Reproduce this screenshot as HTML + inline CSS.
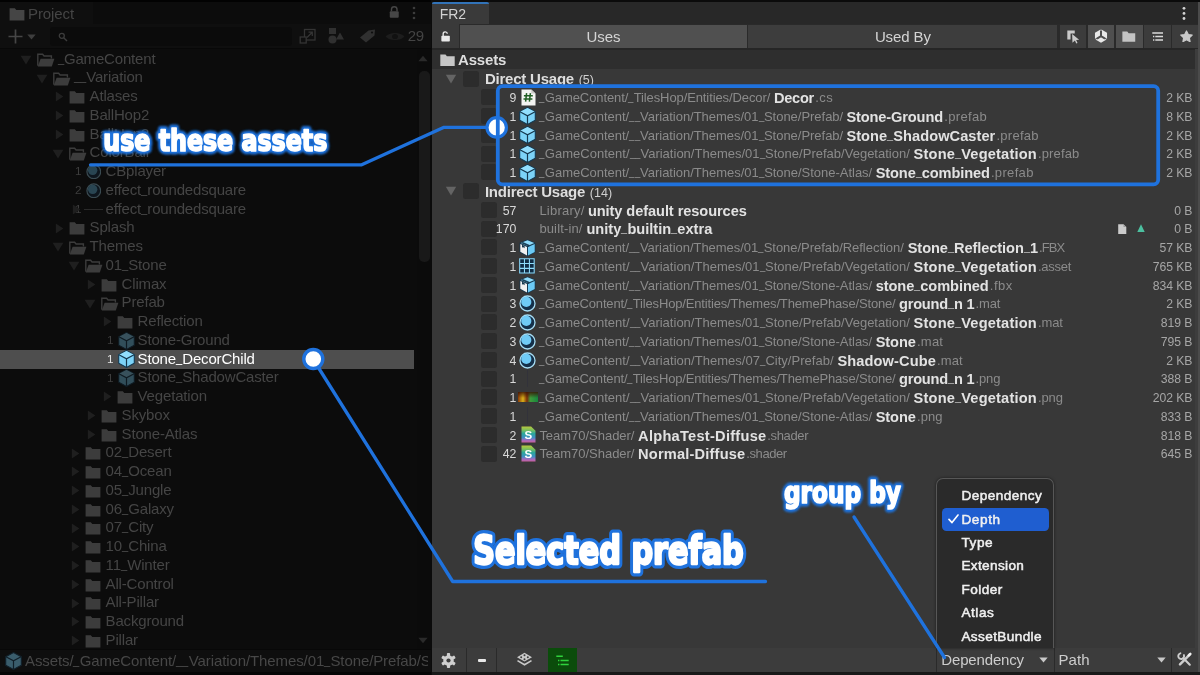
<!DOCTYPE html>
<html lang="en"><head><meta charset="utf-8"><title>FR2 - Find Reference 2</title>
<style>
*{box-sizing:border-box}
html,body{margin:0;padding:0}
body{width:1200px;height:675px;overflow:hidden;background:#0b0b0b;position:relative;font-family:"Liberation Sans",sans-serif;font-size:15px}
#L{position:absolute;left:0;top:0;width:431px;height:675px;background:#0c0c0c;overflow:hidden}
#R{position:absolute;left:432px;top:0;width:768px;height:675px;background:#383838;overflow:hidden}
.gl{position:absolute;left:0;top:0;right:0;bottom:0;will-change:transform}
.ic{position:absolute;display:block}
.t{position:absolute;white-space:pre;height:18.750px;line-height:18.750px}
i.u{font-style:normal;display:inline-block;width:.42em;transform:translateY(-.12em) scaleX(.74);transform-origin:0 50%}
.cb{position:absolute;width:15.500px;height:16px;background:#2c2c2c;border-radius:2.500px}
.cnt{text-align:right;font-size:12.300px;color:#d8d8d8;letter-spacing:0}
.ln{left:108px}
.p{font-size:13px;color:#8b8b8b;letter-spacing:-.15px}
.n{font-size:14.600px;font-weight:700;color:#e2e2e2;letter-spacing:-.12px}
.e{font-size:13px;color:#8b8b8b}
.sz{font-size:12.200px;color:#a6a6a6;letter-spacing:-.05px}
.grp .n{font-size:15px;color:#dedede;letter-spacing:-.22px}
.gc{font-size:12.500px;color:#cfcfcf;margin-left:.5px}
.lt{color:#454545;letter-spacing:-.17px;margin-left:-.4px}
.lc{color:#3d3d3d;font-size:11.800px;text-align:right}
.ls{color:#fff}
.sel{position:absolute;left:0;width:414px;height:18.400px;background:#4e4e4e}
.tb{position:absolute;top:24.500px;height:23px;display:flex;align-items:center;justify-content:center;color:#d4d4d4;font-size:15px;letter-spacing:-.1px}
.mi{font-size:13.600px;font-weight:400;color:#f0f0f0;-webkit-text-stroke:.5px #f0f0f0}</style></head>
<body>
<div id="L"><div class=gl>

<div style="position:absolute;left:0;top:0;width:431px;height:2px;background:#020202"></div>
<div style="position:absolute;left:0;top:2px;width:93px;height:22px;background:#0f0f0f"></div>
<div style="position:absolute;left:0;top:24px;width:431px;height:24px;background:#0f0f0f"></div>
<div style="position:absolute;left:0;top:48px;width:431px;height:1px;background:#080808"></div>
<svg class=ic style="left:9px;top:7px" width="16" height="14" viewBox="0 0 16 14"><path d="M.6 1.200h5.200l1.500 1.800h8.100v10.400H.600z" fill="#454545"/></svg>
<div class="t" style="left:28px;top:5.200px;color:#454545;letter-spacing:-.1px">Project</div>
<svg class=ic style="left:389.300px;top:6.300px" width="10.500" height="12.500" viewBox="0 0 11 13"><path d="M2.600 5.500V3.700a2.900 2.900 0 0 1 5.800 0v1.800" fill="none" stroke="#464646" stroke-width="1.500"/><rect x=".8" y="5.500" width="9.400" height="6.800" rx="1" fill="#464646"/></svg>
<svg class=ic style="left:412px;top:6px" width="4" height="14" viewBox="0 0 4 14"><circle cx="2" cy="2" r="1.300" fill="#3c3c3c"/><circle cx="2" cy="7" r="1.300" fill="#3c3c3c"/><circle cx="2" cy="12" r="1.300" fill="#3c3c3c"/></svg>
<svg class=ic style="left:8px;top:29px" width="15" height="15" viewBox="0 0 15 15"><path d="M7.500 .5v14M.5 7.500h14" stroke="#464646" stroke-width="1.700"/></svg>
<svg class=ic style="left:27px;top:34px" width="9" height="6" viewBox="0 0 9 6"><path d="M.3 .6h8.400L4.500 5.400z" fill="#3e3e3e"/></svg>
<div style="position:absolute;left:50px;top:27px;width:242px;height:19px;background:#0b0b0b;border-radius:3px"></div>
<svg class=ic style="left:58px;top:32px" width="10" height="10" viewBox="0 0 10 10"><circle cx="3.800" cy="3.800" r="2.500" fill="none" stroke="#3c3c3c" stroke-width="1.300"/><path d="M5.700 5.700 9 9" stroke="#3c3c3c" stroke-width="1.400"/></svg>
<svg class=ic style="left:299px;top:28px" width="18" height="17" viewBox="0 0 18 17"><rect x="5.500" y="1.500" width="10.500" height="10.500" fill="none" stroke="#343434" stroke-width="1.300"/><rect x="1.200" y="9" width="6" height="6" fill="#0f0f0f" stroke="#343434" stroke-width="1.300"/><path d="M8 9.500 13 4.500M9.500 4.200h3.800v3.800" fill="none" stroke="#343434" stroke-width="1.300"/></svg>
<svg class=ic style="left:327px;top:27px" width="18" height="18" viewBox="0 0 18 18"><rect x="2" y="1" width="7" height="6" fill="#303030"/><circle cx="5.500" cy="12.500" r="4" fill="#303030"/><path d="M13 5.500 17 12.500H9z" fill="#303030"/></svg>
<svg class=ic style="left:358.500px;top:28px" width="18" height="16" viewBox="0 0 18 16"><path d="M1 9.500 9.500 2.500 16 1.500 15.500 7.500 7 14.500z" fill="#303030"/><circle cx="13" cy="4.500" r="1.100" fill="#0f0f0f"/></svg>
<svg class=ic style="left:385px;top:31px" width="20" height="11" preserveAspectRatio="none" viewBox="0 0 18 11"><path d="M.5 5.500C4 .8 14 .8 17.500 5.500 14 10.200 4 10.200 .5 5.500z" fill="#1d1d1d"/><circle cx="9" cy="5.500" r="2.600" fill="#111"/></svg>
<div class="t" style="left:407.800px;top:27.400px;color:#444;letter-spacing:-.3px">29</div>
<div style="position:absolute;left:417px;top:49px;width:14px;height:600px;background:#0b0b0b"></div>
<div style="position:absolute;left:419px;top:71px;width:10.500px;height:191px;background:#191919;border-radius:5px"></div>
<svg class=ic style="left:418.300px;top:55.300px" width="10" height="7" viewBox="0 0 10 7"><path d="M5 .8 9.600 6.200H.400z" fill="#2a2a2a"/></svg>
<svg class=ic style="left:418.300px;top:636.800px" width="10" height="7" viewBox="0 0 10 7"><path d="M5 6.200 9.600 .8H.400z" fill="#2a2a2a"/></svg>
<div style="position:absolute;left:0;top:649px;width:431px;height:26px;background:#0e0e0e;border-top:1px solid #080808"></div>
<div style="position:absolute;left:0;top:672px;width:431px;height:3px;background:#060606"></div>
<svg class=ic style="left:5px;top:652px" width="17" height="18" viewBox="0 0 17 18" opacity=".4"><path d="M8.500 .6 16.300 4.700v8.600L8.500 17.400.7 13.300V4.700z" fill="#7cd3f8" stroke="#15384f" stroke-width="1.100"/><path d="M.9 4.800 8.500 8.900 16.100 4.800M8.500 8.900v8.300" fill="none" stroke="#15384f" stroke-width="1.200"/></svg>
<div class="t" style="left:25px;top:652.200px;width:403px;overflow:hidden;color:#474747;letter-spacing:-.1px">Assets/<i class=u>_</i>GameContent/<i class=u>_</i><i class=u>_</i>Variation/Themes/01<i class=u>_</i>Stone/Prefab/Stone<i class=u>_</i>DecorChild.prefab</div>

<svg class=ic style="left:20.4px;top:54.9px" width="12" height="10" viewBox="0 0 12 10"><path d="M.6 .8h10.800L6 9.400z" fill="#1f1f1f"/></svg>
<svg class=ic style="left:36.7px;top:53.1px" width="18" height="14" viewBox="0 0 18 14"><path d="M.8 12.800V1.200h4.800l1.500 1.800h7.300v2.600" fill="none" stroke="#3c3c3c" stroke-width="1.400"/><path d="M3.600 5.800h13.800l-2.600 7.600H.800z" fill="#3c3c3c"/></svg>
<div class="t lt" style="left:58px;top:49.60px"><i class=u>_</i>GameContent</div>
<svg class=ic style="left:36.4px;top:73.65px" width="12" height="10" viewBox="0 0 12 10"><path d="M.6 .8h10.800L6 9.400z" fill="#1f1f1f"/></svg>
<svg class=ic style="left:52.7px;top:71.85px" width="18" height="14" viewBox="0 0 18 14"><path d="M.8 12.800V1.200h4.800l1.500 1.800h7.300v2.600" fill="none" stroke="#3c3c3c" stroke-width="1.400"/><path d="M3.600 5.800h13.800l-2.600 7.600H.800z" fill="#3c3c3c"/></svg>
<div class="t lt" style="left:74px;top:68.35px"><i class=u>_</i><i class=u>_</i>Variation</div>
<svg class=ic style="left:55px;top:91.3px" width="9" height="11" viewBox="0 0 9 11"><path d="M.8 .6 8.400 5.500.800 10.400z" fill="#1f1f1f"/></svg>
<svg class=ic style="left:69.4px;top:90.0px" width="16" height="14" viewBox="0 0 16 14"><path d="M.6 1.200h5.200l1.500 1.800h8.100v10.400H.600z" fill="#3c3c3c"/></svg>
<div class="t lt" style="left:90px;top:87.10px">Atlases</div>
<svg class=ic style="left:55px;top:110.05px" width="9" height="11" viewBox="0 0 9 11"><path d="M.8 .6 8.400 5.500.800 10.400z" fill="#1f1f1f"/></svg>
<svg class=ic style="left:69.4px;top:108.75px" width="16" height="14" viewBox="0 0 16 14"><path d="M.6 1.200h5.200l1.500 1.800h8.100v10.400H.600z" fill="#3c3c3c"/></svg>
<div class="t lt" style="left:90px;top:105.85px">BallHop2</div>
<svg class=ic style="left:55px;top:128.8px" width="9" height="11" viewBox="0 0 9 11"><path d="M.8 .6 8.400 5.500.800 10.400z" fill="#1f1f1f"/></svg>
<svg class=ic style="left:69.4px;top:127.5px" width="16" height="14" viewBox="0 0 16 14"><path d="M.6 1.200h5.200l1.500 1.800h8.100v10.400H.600z" fill="#3c3c3c"/></svg>
<div class="t lt" style="left:90px;top:124.60px">BallHop3</div>
<svg class=ic style="left:52.4px;top:148.65px" width="12" height="10" viewBox="0 0 12 10"><path d="M.6 .8h10.800L6 9.400z" fill="#1f1f1f"/></svg>
<svg class=ic style="left:68.7px;top:146.85px" width="18" height="14" viewBox="0 0 18 14"><path d="M.8 12.800V1.200h4.800l1.500 1.800h7.300v2.600" fill="none" stroke="#3c3c3c" stroke-width="1.400"/><path d="M3.600 5.800h13.800l-2.600 7.600H.800z" fill="#3c3c3c"/></svg>
<div class="t lt" style="left:90px;top:143.35px">ColorBall</div>
<div class="t lc" style="left:68px;width:13.500px;top:162.40px"><span>1</span></div>
<svg class=ic style="left:85.6px;top:163.8px" width="15.6" height="15.6" viewBox="0 0 17 17" opacity=".3"><circle cx="8.500" cy="8.500" r="7.500" fill="#14304a" stroke="#a5dcf3" stroke-width="1.300"/><circle cx="7.300" cy="6.900" r="5.100" fill="#6fcbf6"/></svg>
<div class="t lt" style="left:106px;top:162.10px">CBplayer</div>
<div class="t lc" style="left:68px;width:13.500px;top:181.15px"><span>2</span></div>
<svg class=ic style="left:85.6px;top:182.55px" width="15.6" height="15.6" viewBox="0 0 17 17" opacity=".3"><circle cx="8.500" cy="8.500" r="7.500" fill="#14304a" stroke="#a5dcf3" stroke-width="1.300"/><circle cx="7.300" cy="6.900" r="5.100" fill="#6fcbf6"/></svg>
<div class="t lt" style="left:106px;top:180.85px">effect<i class=u>_</i>roundedsquare</div>
<div class="t lc" style="left:68px;width:13.500px;top:199.90px"><span>1</span></div>
<div class=ic style="left:83.5px;top:208.60px;width:19px;height:1.600px;background:#2a2a2a"></div>
<svg class=ic style="left:72px;top:204.2px" width="9" height="11" viewBox="0 0 9 11"><path d="M.8 .6 8.400 5.500.800 10.400z" fill="#1f1f1f"/></svg>
<div class="t lt" style="left:106px;top:199.60px">effect<i class=u>_</i>roundedsquare</div>
<svg class=ic style="left:55px;top:222.55px" width="9" height="11" viewBox="0 0 9 11"><path d="M.8 .6 8.400 5.500.800 10.400z" fill="#1f1f1f"/></svg>
<svg class=ic style="left:69.4px;top:221.25px" width="16" height="14" viewBox="0 0 16 14"><path d="M.6 1.200h5.200l1.500 1.800h8.100v10.400H.600z" fill="#3c3c3c"/></svg>
<div class="t lt" style="left:90px;top:218.35px">Splash</div>
<svg class=ic style="left:52.4px;top:242.4px" width="12" height="10" viewBox="0 0 12 10"><path d="M.6 .8h10.800L6 9.400z" fill="#1f1f1f"/></svg>
<svg class=ic style="left:68.7px;top:240.6px" width="18" height="14" viewBox="0 0 18 14"><path d="M.8 12.800V1.200h4.800l1.500 1.800h7.300v2.600" fill="none" stroke="#3c3c3c" stroke-width="1.400"/><path d="M3.600 5.800h13.800l-2.600 7.600H.800z" fill="#3c3c3c"/></svg>
<div class="t lt" style="left:90px;top:237.10px">Themes</div>
<svg class=ic style="left:68.4px;top:261.15px" width="12" height="10" viewBox="0 0 12 10"><path d="M.6 .8h10.800L6 9.400z" fill="#1f1f1f"/></svg>
<svg class=ic style="left:84.7px;top:259.35px" width="18" height="14" viewBox="0 0 18 14"><path d="M.8 12.800V1.200h4.800l1.500 1.800h7.300v2.600" fill="none" stroke="#3c3c3c" stroke-width="1.400"/><path d="M3.600 5.800h13.800l-2.600 7.600H.800z" fill="#3c3c3c"/></svg>
<div class="t lt" style="left:106px;top:255.85px">01<i class=u>_</i>Stone</div>
<svg class=ic style="left:87px;top:278.8px" width="9" height="11" viewBox="0 0 9 11"><path d="M.8 .6 8.400 5.500.800 10.400z" fill="#1f1f1f"/></svg>
<svg class=ic style="left:101.4px;top:277.5px" width="16" height="14" viewBox="0 0 16 14"><path d="M.6 1.200h5.200l1.500 1.800h8.100v10.400H.600z" fill="#3c3c3c"/></svg>
<div class="t lt" style="left:122px;top:274.60px">Climax</div>
<svg class=ic style="left:84.4px;top:298.65px" width="12" height="10" viewBox="0 0 12 10"><path d="M.6 .8h10.800L6 9.400z" fill="#1f1f1f"/></svg>
<svg class=ic style="left:100.7px;top:296.85px" width="18" height="14" viewBox="0 0 18 14"><path d="M.8 12.800V1.200h4.800l1.500 1.800h7.300v2.600" fill="none" stroke="#3c3c3c" stroke-width="1.400"/><path d="M3.600 5.800h13.800l-2.600 7.600H.800z" fill="#3c3c3c"/></svg>
<div class="t lt" style="left:122px;top:293.35px">Prefab</div>
<svg class=ic style="left:103px;top:316.3px" width="9" height="11" viewBox="0 0 9 11"><path d="M.8 .6 8.400 5.500.800 10.400z" fill="#1f1f1f"/></svg>
<svg class=ic style="left:117.4px;top:315.0px" width="16" height="14" viewBox="0 0 16 14"><path d="M.6 1.200h5.200l1.500 1.800h8.100v10.400H.600z" fill="#3c3c3c"/></svg>
<div class="t lt" style="left:138px;top:312.10px">Reflection</div>
<div class="t lc" style="left:100px;width:13.500px;top:331.15px"><span>1</span></div>
<svg class=ic style="left:118px;top:331.65px" width="17" height="18" viewBox="0 0 17 18" opacity=".33"><path d="M8.5 .6 16.3 4.7v8.6L8.5 17.4.7 13.3V4.700z" fill="#7cd3f8" stroke="#15384f" stroke-width="1.1" stroke-linejoin="round"/><path d="M8.5 .9 15.9 4.8 8.5 8.800 1.100 4.800z" fill="#92defd"/><path d="M.9 4.800 8.500 8.900 16.100 4.800M8.500 8.900v8.300" fill="none" stroke="#15384f" stroke-width="1.2"/></svg>
<div class="t lt" style="left:138px;top:330.85px">Stone-Ground</div>
<div class=sel style="top:350.20px"></div>
<div class="t lc" style="left:100px;width:13.500px;top:349.90px"><span style="color:#e4e4e4">1</span></div>
<svg class=ic style="left:118px;top:350.4px" width="17" height="18" viewBox="0 0 17 18"><path d="M8.5 .6 16.3 4.7v8.6L8.5 17.4.7 13.3V4.700z" fill="#7cd3f8" stroke="#15384f" stroke-width="1.1" stroke-linejoin="round"/><path d="M8.5 .9 15.9 4.8 8.5 8.800 1.100 4.800z" fill="#92defd"/><path d="M.9 4.800 8.500 8.900 16.100 4.800M8.500 8.900v8.300" fill="none" stroke="#15384f" stroke-width="1.2"/></svg>
<div class="t lt ls" style="left:138px;top:349.60px">Stone<i class=u>_</i>DecorChild</div>
<div class="t lc" style="left:100px;width:13.500px;top:368.65px"><span>1</span></div>
<svg class=ic style="left:118px;top:369.15px" width="17" height="18" viewBox="0 0 17 18" opacity=".33"><path d="M8.5 .6 16.3 4.7v8.6L8.5 17.4.7 13.3V4.700z" fill="#7cd3f8" stroke="#15384f" stroke-width="1.1" stroke-linejoin="round"/><path d="M8.5 .9 15.9 4.8 8.5 8.800 1.100 4.800z" fill="#92defd"/><path d="M.9 4.800 8.500 8.900 16.100 4.800M8.500 8.900v8.300" fill="none" stroke="#15384f" stroke-width="1.2"/></svg>
<div class="t lt" style="left:138px;top:368.35px">Stone<i class=u>_</i>ShadowCaster</div>
<svg class=ic style="left:103px;top:391.3px" width="9" height="11" viewBox="0 0 9 11"><path d="M.8 .6 8.400 5.500.800 10.400z" fill="#1f1f1f"/></svg>
<svg class=ic style="left:117.4px;top:390.0px" width="16" height="14" viewBox="0 0 16 14"><path d="M.6 1.200h5.200l1.500 1.800h8.100v10.400H.600z" fill="#3c3c3c"/></svg>
<div class="t lt" style="left:138px;top:387.10px">Vegetation</div>
<svg class=ic style="left:87px;top:410.05px" width="9" height="11" viewBox="0 0 9 11"><path d="M.8 .6 8.400 5.500.800 10.400z" fill="#1f1f1f"/></svg>
<svg class=ic style="left:101.4px;top:408.75px" width="16" height="14" viewBox="0 0 16 14"><path d="M.6 1.200h5.200l1.500 1.800h8.100v10.400H.600z" fill="#3c3c3c"/></svg>
<div class="t lt" style="left:122px;top:405.85px">Skybox</div>
<svg class=ic style="left:87px;top:428.8px" width="9" height="11" viewBox="0 0 9 11"><path d="M.8 .6 8.400 5.500.800 10.400z" fill="#1f1f1f"/></svg>
<svg class=ic style="left:101.4px;top:427.5px" width="16" height="14" viewBox="0 0 16 14"><path d="M.6 1.200h5.200l1.500 1.800h8.100v10.400H.600z" fill="#3c3c3c"/></svg>
<div class="t lt" style="left:122px;top:424.60px">Stone-Atlas</div>
<svg class=ic style="left:71px;top:447.55px" width="9" height="11" viewBox="0 0 9 11"><path d="M.8 .6 8.400 5.500.800 10.400z" fill="#1f1f1f"/></svg>
<svg class=ic style="left:85.4px;top:446.25px" width="16" height="14" viewBox="0 0 16 14"><path d="M.6 1.200h5.200l1.500 1.800h8.100v10.400H.600z" fill="#3c3c3c"/></svg>
<div class="t lt" style="left:106px;top:443.35px">02<i class=u>_</i>Desert</div>
<svg class=ic style="left:71px;top:466.3px" width="9" height="11" viewBox="0 0 9 11"><path d="M.8 .6 8.400 5.500.800 10.400z" fill="#1f1f1f"/></svg>
<svg class=ic style="left:85.4px;top:465.0px" width="16" height="14" viewBox="0 0 16 14"><path d="M.6 1.200h5.200l1.500 1.800h8.100v10.400H.600z" fill="#3c3c3c"/></svg>
<div class="t lt" style="left:106px;top:462.10px">04<i class=u>_</i>Ocean</div>
<svg class=ic style="left:71px;top:485.05px" width="9" height="11" viewBox="0 0 9 11"><path d="M.8 .6 8.400 5.500.800 10.400z" fill="#1f1f1f"/></svg>
<svg class=ic style="left:85.4px;top:483.75px" width="16" height="14" viewBox="0 0 16 14"><path d="M.6 1.200h5.200l1.500 1.800h8.100v10.400H.600z" fill="#3c3c3c"/></svg>
<div class="t lt" style="left:106px;top:480.85px">05<i class=u>_</i>Jungle</div>
<svg class=ic style="left:71px;top:503.8px" width="9" height="11" viewBox="0 0 9 11"><path d="M.8 .6 8.400 5.500.800 10.400z" fill="#1f1f1f"/></svg>
<svg class=ic style="left:85.4px;top:502.5px" width="16" height="14" viewBox="0 0 16 14"><path d="M.6 1.200h5.200l1.500 1.800h8.100v10.400H.600z" fill="#3c3c3c"/></svg>
<div class="t lt" style="left:106px;top:499.60px">06<i class=u>_</i>Galaxy</div>
<svg class=ic style="left:71px;top:522.55px" width="9" height="11" viewBox="0 0 9 11"><path d="M.8 .6 8.400 5.500.800 10.400z" fill="#1f1f1f"/></svg>
<svg class=ic style="left:85.4px;top:521.25px" width="16" height="14" viewBox="0 0 16 14"><path d="M.6 1.200h5.200l1.500 1.800h8.100v10.400H.600z" fill="#3c3c3c"/></svg>
<div class="t lt" style="left:106px;top:518.35px">07<i class=u>_</i>City</div>
<svg class=ic style="left:71px;top:541.3px" width="9" height="11" viewBox="0 0 9 11"><path d="M.8 .6 8.400 5.500.800 10.400z" fill="#1f1f1f"/></svg>
<svg class=ic style="left:85.4px;top:540.0px" width="16" height="14" viewBox="0 0 16 14"><path d="M.6 1.200h5.200l1.500 1.800h8.100v10.400H.600z" fill="#3c3c3c"/></svg>
<div class="t lt" style="left:106px;top:537.10px">10<i class=u>_</i>China</div>
<svg class=ic style="left:71px;top:560.05px" width="9" height="11" viewBox="0 0 9 11"><path d="M.8 .6 8.400 5.500.800 10.400z" fill="#1f1f1f"/></svg>
<svg class=ic style="left:85.4px;top:558.75px" width="16" height="14" viewBox="0 0 16 14"><path d="M.6 1.200h5.200l1.500 1.800h8.100v10.400H.600z" fill="#3c3c3c"/></svg>
<div class="t lt" style="left:106px;top:555.85px">11<i class=u>_</i>Winter</div>
<svg class=ic style="left:71px;top:578.8px" width="9" height="11" viewBox="0 0 9 11"><path d="M.8 .6 8.400 5.500.800 10.400z" fill="#1f1f1f"/></svg>
<svg class=ic style="left:85.4px;top:577.5px" width="16" height="14" viewBox="0 0 16 14"><path d="M.6 1.200h5.200l1.500 1.800h8.100v10.400H.600z" fill="#3c3c3c"/></svg>
<div class="t lt" style="left:106px;top:574.60px">All-Control</div>
<svg class=ic style="left:71px;top:597.55px" width="9" height="11" viewBox="0 0 9 11"><path d="M.8 .6 8.400 5.500.800 10.400z" fill="#1f1f1f"/></svg>
<svg class=ic style="left:85.4px;top:596.25px" width="16" height="14" viewBox="0 0 16 14"><path d="M.6 1.200h5.200l1.500 1.800h8.100v10.400H.600z" fill="#3c3c3c"/></svg>
<div class="t lt" style="left:106px;top:593.35px">All-Pillar</div>
<svg class=ic style="left:71px;top:616.3px" width="9" height="11" viewBox="0 0 9 11"><path d="M.8 .6 8.400 5.500.800 10.400z" fill="#1f1f1f"/></svg>
<svg class=ic style="left:85.4px;top:615.0px" width="16" height="14" viewBox="0 0 16 14"><path d="M.6 1.200h5.200l1.500 1.800h8.100v10.400H.600z" fill="#3c3c3c"/></svg>
<div class="t lt" style="left:106px;top:612.10px">Background</div>
<svg class=ic style="left:71px;top:635.05px" width="9" height="11" viewBox="0 0 9 11"><path d="M.8 .6 8.400 5.500.800 10.400z" fill="#1f1f1f"/></svg>
<svg class=ic style="left:85.4px;top:633.75px" width="16" height="14" viewBox="0 0 16 14"><path d="M.6 1.200h5.200l1.500 1.800h8.100v10.400H.600z" fill="#3c3c3c"/></svg>
<div class="t lt" style="left:106px;top:630.85px">Pillar</div>
</div></div>
<div id="R"><div class=gl>

<div style="position:absolute;left:0;top:0;width:768px;height:2px;background:#0b0b0b"></div>
<div style="position:absolute;left:0;top:2px;width:768px;height:22px;background:#282828"></div>
<div style="position:absolute;left:0;top:2px;width:57px;height:22px;background:#3a3a3a;border-top:2px solid #3273b8;border-radius:2px 2px 0 0"></div>
<div class="t" style="left:7.800px;top:5px;color:#d2d2d2;font-size:14px;letter-spacing:-.1px">FR2</div>
<svg class=ic style="left:749.5px;top:5.500px" width="4" height="15" viewBox="0 0 4 15"><circle cx="2" cy="2.300" r="1.400" fill="#d4d4d4"/><circle cx="2" cy="7.400" r="1.400" fill="#d4d4d4"/><circle cx="2" cy="12.500" r="1.400" fill="#d4d4d4"/></svg>
<div style="position:absolute;left:0;top:24px;width:768px;height:24.500px;background:#2a2a2a"></div>
<div style="position:absolute;left:0;top:24px;width:27px;height:24.300px;background:#3a3a3a"></div>
<svg class=ic style="left:8.8px;top:30.800px" width="9.200" height="10.800" viewBox="0 0 10 12"><path d="M2.300 5.500V3.400a2.300 2.300 0 0 1 4.600-.3" fill="none" stroke="#e6e6e6" stroke-width="1.500"/><rect x=".3" y="5.200" width="9.400" height="6.500" rx=".8" fill="#e9e9e9"/></svg>
<div class=tb style="left:28px;width:287px;background:#505050">Uses</div>
<div class=tb style="left:316.3px;width:309.200px;background:#3d3d3d">Used By</div>
<div class=tb style="left:627.5px;width:26.5px;background:#3c3c3c"><svg width="14" height="15" viewBox="0 0 16 17"><path d="M1.500 1.500h8.500v3.700h-4.800v6.800H1.500z" fill="#cacaca"/><path d="M7 5.600 15 12.200 11.600 12.500 13.200 15.900 11.700 16.500 10.200 13.200 7.400 15.600z" fill="#cacaca"/></svg></div>
<div class=tb style="left:655.5px;width:26.5px;background:#4f4f4f"><svg width="14" height="14" viewBox="0 0 16 16"><path d="M8 .4 14.900 4.200v7.600L8 15.600 1.100 11.800V4.200z" fill="#e8e8e8"/><path d="M8 8.200V2.200M8 8.200l4.600 2.700M8 8.200 3.400 10.900" stroke="#4f4f4f" stroke-width="2.300"/><path d="M8 0v3.200M15 12l-2.800-1.600M1 12l2.800-1.600" stroke="#4f4f4f" stroke-width="1.200"/></svg></div>
<div class=tb style="left:683.5px;width:27.0px;background:#4f4f4f"><svg width="13.600" height="11" viewBox="0 0 16 13"><path d="M.4 .6h5.800l1.600 2h7.800v10H.400z" fill="#c4c4c4"/></svg></div>
<div class=tb style="left:712px;width:26.5px;background:#3c3c3c"><svg width="11.500" height="9" viewBox="0 0 14 11"><path d="M.3 1.200h13.400M4 5.500h9.700M4 9.800h9.700" stroke="#dadada" stroke-width="1.900"/><path d="M1.200 5.500h1.600M1.200 9.800h1.600" stroke="#dadada" stroke-width="1.900"/></svg></div>
<div class=tb style="left:740px;width:28px;background:#3c3c3c"><svg width="13" height="12.500" viewBox="0 0 15 14"><path d="M7.500 .9 9.600 5 14.100 5.600 10.800 8.800 11.600 13.200 7.500 11.100 3.400 13.200 4.200 8.800 .9 5.600 5.400 5z" fill="#c8c8c8" stroke="#c8c8c8" stroke-width="1.400" stroke-linejoin="round"/></svg></div>
<div style="position:absolute;left:0;top:48.300px;width:768px;height:1.400px;background:#262626"></div>
<div style="position:absolute;left:0;top:49.500px;width:768px;height:19.300px;background:#2e2e2e"></div>
<svg class=ic style="left:7.5px;top:53.600px" width="15" height="12.500" viewBox="0 0 15 12.500"><path d="M.3 .5h5.200l1.400 1.700h7.800v10H.300z" fill="#c6c6c6"/></svg>
<div class="t grp" style="left:26px;top:51.300px"><span class=n style="letter-spacing:-.15px">Assets</span></div>

<svg class=ic style="left:13px;top:73.75px" width="12" height="10" viewBox="0 0 12 10"><path d="M.8 .8h10.400L6 9.600z" fill="#646464"/></svg><div class=cb style="left:31px;top:70.65px"></div><div class="t grp" style="left:52.89999999999998px;top:70.25px"><span class=n>Direct Usage</span> <span class=gc>(5)</span></div>
<svg class=ic style="left:13px;top:186.25px" width="12" height="10" viewBox="0 0 12 10"><path d="M.8 .8h10.400L6 9.600z" fill="#646464"/></svg><div class=cb style="left:31px;top:183.15px"></div><div class="t grp" style="left:52.89999999999998px;top:182.75px"><span class=n>Indirect Usage</span> <span class=gc>(14)</span></div>
<div class=cb style="left:49.3px;top:89.40px"></div>
<div class="t cnt" style="left:48px;width:36.400px;top:89.00px">9</div>
<svg class=ic style="left:88.6px;top:88.8px" width="15" height="17" viewBox="0 0 15 17"><path d="M.5 .4h9.800l4.200 4.200v11.900H.500z" fill="#f3f3f1"/><path d="M10.300 .4v4.200h4.200z" fill="#c9c9c6"/><path d="M5.600 4.200 4.600 12.600M9.400 4.200 8.400 12.600M2.900 6.700h8.900M2.500 10.100h8.900" stroke="#1f5e22" stroke-width="1.5" fill="none"/></svg>
<span class="t p" style="left:107.40px;top:89.20px;letter-spacing:-0.101px"><i class=u>_</i>GameContent/<i class=u>_</i>TilesHop/Entities/Decor/</span>
<span class="t n" style="left:342.00px;top:89.00px;letter-spacing:-0.294px">Decor</span>
<span class="t e" style="left:383.30px;top:89.20px;letter-spacing:0.387px">.cs</span>
<div class="t sz" style="right:7.600px;top:89.00px">2 KB</div>
<div class=cb style="left:49.3px;top:108.15px"></div>
<div class="t cnt" style="left:48px;width:36.400px;top:107.75px">1</div>
<svg class=ic style="left:87px;top:107.35px" width="17" height="18" viewBox="0 0 17 18"><path d="M8.5 .6 16.3 4.7v8.6L8.5 17.4.7 13.3V4.700z" fill="#7cd3f8" stroke="#15384f" stroke-width="1.1" stroke-linejoin="round"/><path d="M8.5 .9 15.9 4.8 8.5 8.800 1.100 4.800z" fill="#92defd"/><path d="M.9 4.800 8.500 8.900 16.100 4.800M8.500 8.900v8.300" fill="none" stroke="#15384f" stroke-width="1.2"/></svg>
<span class="t p" style="left:107.40px;top:107.95px;letter-spacing:-0.025px"><i class=u>_</i>GameContent/<i class=u>_</i><i class=u>_</i>Variation/Themes/01<i class=u>_</i>Stone/Prefab/</span>
<span class="t n" style="left:414.40px;top:107.75px;letter-spacing:-0.127px">Stone-Ground</span>
<span class="t e" style="left:512.20px;top:107.95px;letter-spacing:0.353px">.prefab</span>
<div class="t sz" style="right:7.600px;top:107.75px">8 KB</div>
<div class=cb style="left:49.3px;top:126.90px"></div>
<div class="t cnt" style="left:48px;width:36.400px;top:126.50px">1</div>
<svg class=ic style="left:87px;top:126.1px" width="17" height="18" viewBox="0 0 17 18"><path d="M8.5 .6 16.3 4.7v8.6L8.5 17.4.7 13.3V4.700z" fill="#7cd3f8" stroke="#15384f" stroke-width="1.1" stroke-linejoin="round"/><path d="M8.5 .9 15.9 4.8 8.5 8.800 1.100 4.800z" fill="#92defd"/><path d="M.9 4.800 8.500 8.900 16.100 4.800M8.500 8.900v8.300" fill="none" stroke="#15384f" stroke-width="1.2"/></svg>
<span class="t p" style="left:107.40px;top:126.70px;letter-spacing:-0.025px"><i class=u>_</i>GameContent/<i class=u>_</i><i class=u>_</i>Variation/Themes/01<i class=u>_</i>Stone/Prefab/</span>
<span class="t n" style="left:414.40px;top:126.50px;letter-spacing:0.050px">Stone<i class=u>_</i>ShadowCaster</span>
<span class="t e" style="left:564.40px;top:126.70px;letter-spacing:0.286px">.prefab</span>
<div class="t sz" style="right:7.600px;top:126.50px">2 KB</div>
<div class=cb style="left:49.3px;top:145.65px"></div>
<div class="t cnt" style="left:48px;width:36.400px;top:145.25px">1</div>
<svg class=ic style="left:87px;top:144.85px" width="17" height="18" viewBox="0 0 17 18"><path d="M8.5 .6 16.3 4.7v8.6L8.5 17.4.7 13.3V4.700z" fill="#7cd3f8" stroke="#15384f" stroke-width="1.1" stroke-linejoin="round"/><path d="M8.5 .9 15.9 4.8 8.5 8.800 1.100 4.800z" fill="#92defd"/><path d="M.9 4.800 8.500 8.900 16.100 4.800M8.500 8.900v8.300" fill="none" stroke="#15384f" stroke-width="1.2"/></svg>
<span class="t p" style="left:107.40px;top:145.45px;letter-spacing:0.010px"><i class=u>_</i>GameContent/<i class=u>_</i><i class=u>_</i>Variation/Themes/01<i class=u>_</i>Stone/Prefab/Vegetation/</span>
<span class="t n" style="left:481.60px;top:145.25px;letter-spacing:0.189px">Stone<i class=u>_</i>Vegetation</span>
<span class="t e" style="left:606.00px;top:145.45px;letter-spacing:0.136px">.prefab</span>
<div class="t sz" style="right:7.600px;top:145.25px">2 KB</div>
<div class=cb style="left:49.3px;top:164.40px"></div>
<div class="t cnt" style="left:48px;width:36.400px;top:164.00px">1</div>
<svg class=ic style="left:87px;top:163.6px" width="17" height="18" viewBox="0 0 17 18"><path d="M8.5 .6 16.3 4.7v8.6L8.5 17.4.7 13.3V4.700z" fill="#7cd3f8" stroke="#15384f" stroke-width="1.1" stroke-linejoin="round"/><path d="M8.5 .9 15.9 4.8 8.5 8.800 1.100 4.800z" fill="#92defd"/><path d="M.9 4.800 8.500 8.900 16.100 4.800M8.500 8.900v8.300" fill="none" stroke="#15384f" stroke-width="1.2"/></svg>
<span class="t p" style="left:107.40px;top:164.20px;letter-spacing:-0.020px"><i class=u>_</i>GameContent/<i class=u>_</i><i class=u>_</i>Variation/Themes/01<i class=u>_</i>Stone/Stone-Atlas/</span>
<span class="t n" style="left:443.70px;top:164.00px;letter-spacing:-0.115px">Stone<i class=u>_</i>combined</span>
<span class="t e" style="left:558.90px;top:164.20px;letter-spacing:0.336px">.prefab</span>
<div class="t sz" style="right:7.600px;top:164.00px">2 KB</div>
<div class=cb style="left:49.3px;top:201.90px"></div>
<div class="t cnt" style="left:48px;width:36.400px;top:201.50px">57</div>
<span class="t p" style="left:107.40px;top:201.70px;letter-spacing:0.220px">Library/</span>
<span class="t n" style="left:155.90px;top:201.50px;letter-spacing:-0.076px">unity default resources</span>
<div class="t sz" style="right:7.600px;top:201.50px">0 B</div>
<div class=cb style="left:49.3px;top:220.65px"></div>
<div class="t cnt" style="left:48px;width:36.400px;top:220.25px">170</div>
<span class="t p" style="left:107.40px;top:220.45px;letter-spacing:0.135px">built-in/</span>
<span class="t n" style="left:154.40px;top:220.25px;letter-spacing:0.006px">unity<i class=u>_</i>builtin<i class=u>_</i>extra</span>
<svg class=ic style="left:686.2px;top:223.55px" width="8.500" height="10.800" viewBox="0 0 8.500 10.800"><path d="M.2 .2h5.300l2.800 2.800v7.600H.200z" fill="#cbcbcb"/><path d="M5.500 .2v2.800h2.800z" fill="#9a9a9a"/></svg>
<svg class=ic style="left:704.5px;top:223.85px" width="8" height="8.400" viewBox="0 0 8 8.400"><path d="M4 .2 7.800 8.200H.200z" fill="#4cc0a0"/></svg>
<div class="t sz" style="right:7.600px;top:220.25px">0 B</div>
<div class=cb style="left:49.3px;top:239.40px"></div>
<div class="t cnt" style="left:48px;width:36.400px;top:239.00px">1</div>
<svg class=ic style="left:87px;top:238.6px" width="17" height="18" viewBox="0 0 17 18"><path d="M8.500 .5 16.400 3.700v9.500L8.500 17.500.600 13.200V3.700z" fill="#15384f"/><path d="M1.300 4.900 8 7.900v8.500L1.300 12.800z" fill="#f1f1f1"/><path d="M9 7.900l6.700-3v8L9 16.400z" fill="#6ccaf5"/><path d="M8.500 1.300 15.300 4 8.500 7 1.700 4z" fill="#8fdcfb"/><path d="M3.800 3.100 10.600 6.100v1l-2 .9V7L2 4z" fill="#15384f" opacity=".95"/><path d="M3 5.700 5.600 6.900V9.300L4.300 8.300 3 8.600z" fill="#15384f"/></svg>
<span class="t p" style="left:107.40px;top:239.20px;letter-spacing:-0.034px"><i class=u>_</i>GameContent/<i class=u>_</i><i class=u>_</i>Variation/Themes/01<i class=u>_</i>Stone/Prefab/Reflection/</span>
<span class="t n" style="left:475.70px;top:239.00px;letter-spacing:-0.075px">Stone<i class=u>_</i>Reflection<i class=u>_</i>1</span>
<span class="t e" style="left:607.00px;top:239.20px;letter-spacing:-0.869px">.FBX</span>
<div class="t sz" style="right:7.600px;top:239.00px">57 KB</div>
<div class=cb style="left:49.3px;top:258.15px"></div>
<div class="t cnt" style="left:48px;width:36.400px;top:257.75px">1</div>
<svg class=ic style="left:87.4px;top:258.15000000000003px" width="15.900" height="15.800" viewBox="0 0 16 16" preserveAspectRatio="none"><rect x=".3" y=".3" width="15.400" height="15.400" fill="#102c44"/><path d="M.7 .7h14.600v14.600H.700zM5.500 .7v14.600M10.500 .7v14.600M.7 5.500h14.600M.7 10.500h14.600" fill="none" stroke="#8edbfa" stroke-width="1.050"/></svg>
<span class="t p" style="left:107.40px;top:257.95px;letter-spacing:0.010px"><i class=u>_</i>GameContent/<i class=u>_</i><i class=u>_</i>Variation/Themes/01<i class=u>_</i>Stone/Prefab/Vegetation/</span>
<span class="t n" style="left:481.60px;top:257.75px;letter-spacing:0.189px">Stone<i class=u>_</i>Vegetation</span>
<span class="t e" style="left:606.00px;top:257.95px;letter-spacing:-0.258px">.asset</span>
<div class="t sz" style="right:7.600px;top:257.75px">765 KB</div>
<div class=cb style="left:49.3px;top:276.90px"></div>
<div class="t cnt" style="left:48px;width:36.400px;top:276.50px">1</div>
<svg class=ic style="left:87px;top:276.1px" width="17" height="18" viewBox="0 0 17 18"><path d="M8.500 .5 16.400 3.700v9.500L8.500 17.500.600 13.200V3.700z" fill="#15384f"/><path d="M1.300 4.900 8 7.900v8.500L1.300 12.800z" fill="#f1f1f1"/><path d="M9 7.900l6.700-3v8L9 16.400z" fill="#6ccaf5"/><path d="M8.500 1.300 15.300 4 8.500 7 1.700 4z" fill="#8fdcfb"/><path d="M3.800 3.100 10.600 6.100v1l-2 .9V7L2 4z" fill="#15384f" opacity=".95"/><path d="M3 5.700 5.600 6.900V9.300L4.300 8.300 3 8.600z" fill="#15384f"/></svg>
<span class="t p" style="left:107.40px;top:276.70px;letter-spacing:-0.020px"><i class=u>_</i>GameContent/<i class=u>_</i><i class=u>_</i>Variation/Themes/01<i class=u>_</i>Stone/Stone-Atlas/</span>
<span class="t n" style="left:443.70px;top:276.50px;letter-spacing:-0.082px">stone<i class=u>_</i>combined</span>
<span class="t e" style="left:557.70px;top:276.70px;letter-spacing:0.577px">.fbx</span>
<div class="t sz" style="right:7.600px;top:276.50px">834 KB</div>
<div class=cb style="left:49.3px;top:295.65px"></div>
<div class="t cnt" style="left:48px;width:36.400px;top:295.25px">3</div>
<svg class=ic style="left:87px;top:295.45000000000005px" width="17" height="17" viewBox="0 0 17 17"><circle cx="8.500" cy="8.500" r="7.500" fill="#14304a" stroke="#a5dcf3" stroke-width="1.300"/><circle cx="7.300" cy="6.900" r="5.100" fill="#6fcbf6"/></svg>
<span class="t p" style="left:107.40px;top:295.45px;letter-spacing:-0.168px"><i class=u>_</i>GameContent/<i class=u>_</i>TilesHop/Entities/Themes/ThemePhase/Stone/</span>
<span class="t n" style="left:467.10px;top:295.25px;letter-spacing:-0.243px">ground<i class=u>_</i>n 1</span>
<span class="t e" style="left:543.50px;top:295.45px;letter-spacing:-0.132px">.mat</span>
<div class="t sz" style="right:7.600px;top:295.25px">2 KB</div>
<div class=cb style="left:49.3px;top:314.40px"></div>
<div class="t cnt" style="left:48px;width:36.400px;top:314.00px">2</div>
<svg class=ic style="left:87px;top:314.20000000000005px" width="17" height="17" viewBox="0 0 17 17"><circle cx="8.500" cy="8.500" r="7.500" fill="#14304a" stroke="#a5dcf3" stroke-width="1.300"/><circle cx="7.300" cy="6.900" r="5.100" fill="#6fcbf6"/></svg>
<span class="t p" style="left:107.40px;top:314.20px;letter-spacing:0.010px"><i class=u>_</i>GameContent/<i class=u>_</i><i class=u>_</i>Variation/Themes/01<i class=u>_</i>Stone/Prefab/Vegetation/</span>
<span class="t n" style="left:481.60px;top:314.00px;letter-spacing:0.189px">Stone<i class=u>_</i>Vegetation</span>
<span class="t e" style="left:606.00px;top:314.20px;letter-spacing:-0.132px">.mat</span>
<div class="t sz" style="right:7.600px;top:314.00px">819 B</div>
<div class=cb style="left:49.3px;top:333.15px"></div>
<div class="t cnt" style="left:48px;width:36.400px;top:332.75px">3</div>
<svg class=ic style="left:87px;top:332.95000000000005px" width="17" height="17" viewBox="0 0 17 17"><circle cx="8.500" cy="8.500" r="7.500" fill="#14304a" stroke="#a5dcf3" stroke-width="1.300"/><circle cx="7.300" cy="6.900" r="5.100" fill="#6fcbf6"/></svg>
<span class="t p" style="left:107.40px;top:332.95px;letter-spacing:-0.020px"><i class=u>_</i>GameContent/<i class=u>_</i><i class=u>_</i>Variation/Themes/01<i class=u>_</i>Stone/Stone-Atlas/</span>
<span class="t n" style="left:443.70px;top:332.75px;letter-spacing:-0.087px">Stone</span>
<span class="t e" style="left:485.00px;top:332.95px;letter-spacing:0.234px">.mat</span>
<div class="t sz" style="right:7.600px;top:332.75px">795 B</div>
<div class=cb style="left:49.3px;top:351.90px"></div>
<div class="t cnt" style="left:48px;width:36.400px;top:351.50px">4</div>
<svg class=ic style="left:87px;top:351.70000000000005px" width="17" height="17" viewBox="0 0 17 17"><circle cx="8.500" cy="8.500" r="7.500" fill="#14304a" stroke="#a5dcf3" stroke-width="1.300"/><circle cx="7.300" cy="6.900" r="5.100" fill="#6fcbf6"/></svg>
<span class="t p" style="left:107.40px;top:351.70px;letter-spacing:0.020px"><i class=u>_</i>GameContent/<i class=u>_</i><i class=u>_</i>Variation/Themes/07<i class=u>_</i>City/Prefab/</span>
<span class="t n" style="left:405.40px;top:351.50px;letter-spacing:0.120px">Shadow-Cube</span>
<span class="t e" style="left:505.00px;top:351.70px;letter-spacing:0.101px">.mat</span>
<div class="t sz" style="right:7.600px;top:351.50px">2 KB</div>
<div class=cb style="left:49.3px;top:370.65px"></div>
<div class="t cnt" style="left:48px;width:36.400px;top:370.25px">1</div>
<div class=ic style="left:94.5px;top:369.85px;width:1.500px;height:17px;background:#32323a"></div>
<span class="t p" style="left:107.40px;top:370.45px;letter-spacing:-0.168px"><i class=u>_</i>GameContent/<i class=u>_</i>TilesHop/Entities/Themes/ThemePhase/Stone/</span>
<span class="t n" style="left:467.10px;top:370.25px;letter-spacing:-0.243px">ground<i class=u>_</i>n 1</span>
<span class="t e" style="left:543.50px;top:370.45px;letter-spacing:-0.138px">.png</span>
<div class="t sz" style="right:7.600px;top:370.25px">388 B</div>
<div class=cb style="left:49.3px;top:389.40px"></div>
<div class="t cnt" style="left:48px;width:36.400px;top:389.00px">1</div>
<svg class=ic style="left:86px;top:392.20000000000005px" width="20" height="10" viewBox="0 0 20 10"><defs><linearGradient id="tg" x1="0" y1="0" x2="1" y2="0"><stop offset="0" stop-color="#8a3a08"/><stop offset=".25" stop-color="#d9b21a"/><stop offset=".45" stop-color="#7a2a08"/><stop offset=".62" stop-color="#3f9a3a"/><stop offset="1" stop-color="#16863e"/></linearGradient><linearGradient id="tg2" x1="0" y1="0" x2="0" y2="1"><stop offset="0" stop-color="#3a1204" stop-opacity=".85"/><stop offset=".6" stop-color="#3a1204" stop-opacity="0"/></linearGradient></defs><rect width="20" height="10" fill="url(#tg)"/><rect width="20" height="10" fill="url(#tg2)"/></svg>
<span class="t p" style="left:107.40px;top:389.20px;letter-spacing:0.010px"><i class=u>_</i>GameContent/<i class=u>_</i><i class=u>_</i>Variation/Themes/01<i class=u>_</i>Stone/Prefab/Vegetation/</span>
<span class="t n" style="left:481.60px;top:389.00px;letter-spacing:0.189px">Stone<i class=u>_</i>Vegetation</span>
<span class="t e" style="left:606.00px;top:389.20px;letter-spacing:-0.138px">.png</span>
<div class="t sz" style="right:7.600px;top:389.00px">202 KB</div>
<div class=cb style="left:49.3px;top:408.15px"></div>
<div class="t cnt" style="left:48px;width:36.400px;top:407.75px">1</div>
<div class=ic style="left:94.5px;top:407.35px;width:1.500px;height:17px;background:#32323a"></div>
<span class="t p" style="left:107.40px;top:407.95px;letter-spacing:-0.020px"><i class=u>_</i>GameContent/<i class=u>_</i><i class=u>_</i>Variation/Themes/01<i class=u>_</i>Stone/Stone-Atlas/</span>
<span class="t n" style="left:443.70px;top:407.75px;letter-spacing:-0.087px">Stone</span>
<span class="t e" style="left:485.00px;top:407.95px;letter-spacing:0.029px">.png</span>
<div class="t sz" style="right:7.600px;top:407.75px">833 B</div>
<div class=cb style="left:49.3px;top:426.90px"></div>
<div class="t cnt" style="left:48px;width:36.400px;top:426.50px">2</div>
<svg class=ic style="left:88.6px;top:426.3px" width="15" height="17" viewBox="0 0 15 17"><path d="M.5 .4h9.600l4.400 4.400v11.700H.500z" fill="url(#sg)"/><text x="7.300" y="13" font-family="Liberation Sans,sans-serif" font-weight="700" font-size="11.500" fill="#fff" text-anchor="middle">S</text></svg>
<span class="t p" style="left:107.40px;top:426.70px;letter-spacing:-0.024px">Team70/Shader/</span>
<span class="t n" style="left:206.10px;top:426.50px;letter-spacing:0.269px">AlphaTest-Diffuse</span>
<span class="t e" style="left:335.30px;top:426.70px;letter-spacing:-0.363px">.shader</span>
<div class="t sz" style="right:7.600px;top:426.50px">818 B</div>
<div class=cb style="left:49.3px;top:445.65px"></div>
<div class="t cnt" style="left:48px;width:36.400px;top:445.25px">42</div>
<svg class=ic style="left:88.6px;top:445.05px" width="15" height="17" viewBox="0 0 15 17"><path d="M.5 .4h9.600l4.400 4.400v11.700H.500z" fill="url(#sg)"/><text x="7.300" y="13" font-family="Liberation Sans,sans-serif" font-weight="700" font-size="11.500" fill="#fff" text-anchor="middle">S</text></svg>
<span class="t p" style="left:107.40px;top:445.45px;letter-spacing:-0.024px">Team70/Shader/</span>
<span class="t n" style="left:206.10px;top:445.25px;letter-spacing:0.192px">Normal-Diffuse</span>
<span class="t e" style="left:314.30px;top:445.45px;letter-spacing:-0.413px">.shader</span>
<div class="t sz" style="right:7.600px;top:445.25px">645 B</div>

<div style="position:absolute;left:0;top:647.500px;width:768px;height:24.500px;background:#3c3c3c"></div>
<div style="position:absolute;left:0;top:672px;width:768px;height:3px;background:#191919"></div>
<div style="position:absolute;left:34px;top:648px;width:1.200px;height:24px;background:#2a2a2a"></div>
<div style="position:absolute;left:64px;top:648px;width:1.200px;height:24px;background:#2a2a2a"></div>
<svg class=ic style="left:9px;top:652.5px" width="15" height="15" viewBox="0 0 15 15"><g fill="#cfcfcf"><circle cx="7.500" cy="7.500" r="5.200"/><rect x="5.900" y="0" width="3.200" height="15" rx=".8"/><rect x="5.900" y="0" width="3.200" height="15" rx=".8" transform="rotate(60 7.500 7.500)"/><rect x="5.900" y="0" width="3.200" height="15" rx=".8" transform="rotate(120 7.500 7.500)"/></g><circle cx="7.500" cy="7.500" r="2.100" fill="#3c3c3c"/></svg>
<div style="position:absolute;left:45.5px;top:658.500px;width:8.500px;height:3px;border-radius:1px;background:#e8e8e8"></div>
<svg class=ic style="left:83.5px;top:652px" width="17" height="16" viewBox="0 0 17 16"><path d="M8.500 .8 16 5.200 8.500 9.600 1 5.200z" fill="#c9c9c9"/><path d="M1.500 8.600 8.500 12.700 15.500 8.600" fill="none" stroke="#c9c9c9" stroke-width="1.600"/><g fill="#3c3c3c"><circle cx="8.500" cy="3.200" r="1"/><circle cx="8.500" cy="7.200" r="1"/><circle cx="5.200" cy="5.200" r="1"/><circle cx="11.800" cy="5.200" r="1"/></g></svg>
<div style="position:absolute;left:116px;top:648px;width:28.700px;height:24px;background:#0b4c0b"></div>
<svg class=ic style="left:124px;top:654.500px" width="13" height="11" viewBox="0 0 13 11"><path d="M.3 1.200h6.500M4.500 5.500h8.200M4.500 9.600h8.200M2 5.500h1.400M2 9.600h1.400" stroke="#2fd23c" stroke-width="1.500"/></svg>
<div style="position:absolute;left:504px;top:648px;width:1.200px;height:24px;background:#2a2a2a"></div>
<div style="position:absolute;left:621.7px;top:648px;width:1.200px;height:24px;background:#2a2a2a"></div>
<div style="position:absolute;left:739px;top:648px;width:1.200px;height:24px;background:#2a2a2a"></div>
<div class="t" style="left:509.3px;top:651.100px;color:#cdcdcd;letter-spacing:-.16px">Dependency</div>
<svg class=ic style="left:607.3px;top:656.800px" width="9" height="6" viewBox="0 0 9 6"><path d="M.3 .5h8.400L4.500 5.600z" fill="#c8c8c8"/></svg>
<div class="t" style="left:626.5px;top:651.100px;color:#cdcdcd;letter-spacing:.1px">Path</div>
<svg class=ic style="left:724.8px;top:656.800px" width="9" height="6" viewBox="0 0 9 6"><path d="M.3 .5h8.400L4.500 5.600z" fill="#c8c8c8"/></svg>
<svg class=ic style="left:745.3px;top:652.200px" width="15" height="15" viewBox="0 0 15 15"><g fill="none" stroke="#cdcdcd" stroke-linecap="round"><path d="M12.900 2.300 3 12.300" stroke-width="2.500"/><path d="M13.300 1.900 11.800 3.400" stroke="#f0f0f0" stroke-width="2.500"/><path d="M6.400 6.300 12.800 12.700" stroke-width="2.100"/><path d="M6.900 3.100A2.900 2.900 0 1 1 3.400 1.300" stroke-width="1.900"/></g></svg>
<div style="position:absolute;left:763.300px;top:49px;width:3px;height:599px;background:#3d3d3d"></div>
<div style="position:absolute;left:766.300px;top:2px;width:1.700px;height:670px;background:#4b4b4b"></div>
<div id="menu" style="position:absolute;left:504px;top:478.300px;width:118px;height:170px;background:#2a2a2a;border:1px solid #575757;border-bottom:none;border-radius:7px 7px 0 0;box-shadow:0 0 3px rgba(0,0,0,.55)"></div>
<div style="position:absolute;left:510px;top:507.700px;width:106.700px;height:23px;background:#1f5ed0;border-radius:4.500px"></div>
<svg class=ic style="left:516px;top:514px" width="11" height="10" viewBox="0 0 11 10"><path d="M1 5.400 4 8.600 10 1" fill="none" stroke="#fff" stroke-width="1.600" stroke-linecap="round" stroke-linejoin="round"/></svg>
<div class="t mi" style="left:529.4px;top:487.10px;letter-spacing:0.46px">Dependency</div>
<div class="t mi" style="left:529.4px;top:510.50px;letter-spacing:0.63px">Depth</div>
<div class="t mi" style="left:529.4px;top:533.90px;letter-spacing:0.57px">Type</div>
<div class="t mi" style="left:529.4px;top:557.30px;letter-spacing:0.35px">Extension</div>
<div class="t mi" style="left:529.4px;top:580.70px;letter-spacing:0.47px">Folder</div>
<div class="t mi" style="left:529.4px;top:604.10px;letter-spacing:0.57px">Atlas</div>
<div class="t mi" style="left:529.4px;top:627.50px;letter-spacing:0.385px">AssetBundle</div>

</div></div>

<svg id="ov" style="position:absolute;left:0;top:0" width="1200" height="675" viewBox="0 0 1200 675">
<defs><linearGradient id="sg" x1="0" y1="0" x2="0" y2="1"><stop offset="0" stop-color="#b9c93e"/><stop offset=".22" stop-color="#7fc05a"/><stop offset=".45" stop-color="#2aa79c"/><stop offset=".7" stop-color="#3f8fc4"/><stop offset=".85" stop-color="#a06cc0"/><stop offset="1" stop-color="#c95f9e"/></linearGradient><filter id="gl" x="-5%" y="-20%" width="110%" height="140%"><feGaussianBlur stdDeviation=".900"/></filter></defs>
<g fill="none" stroke="#1f72dd" stroke-width="3.300" stroke-linejoin="round" stroke-linecap="round">
<path d="M90.500 164.800H361.700L443.500 127.400H486"/>
<path d="M313 359 452.700 581.500H765.500"/>
<path d="M854 517 944.500 657.500"/>
</g>
<circle cx="496.700" cy="127.400" r="9.700" fill="#fff" stroke="#1f72dd" stroke-width="3.200"/>
<rect x="497.800" y="86.200" width="660.400" height="98.100" rx="4.500" fill="none" stroke="#1f72dd" stroke-width="3.800"/>
<circle cx="313.300" cy="359" r="9.500" fill="#fff" stroke="#1f72dd" stroke-width="3.400"/>
<g font-family="'DejaVu Sans Condensed','DejaVu Sans',sans-serif" font-weight="700" stroke-linejoin="round">
<g font-size="26" transform="translate(103.300 151) scale(1 1.130)">
<text x="0" y="0" textLength="224" lengthAdjust="spacingAndGlyphs" fill="#1f72dd" stroke="#1f72dd" stroke-width="6" filter="url(#gl)">use these assets</text>
<text x="0" y="0" textLength="224" lengthAdjust="spacingAndGlyphs" fill="#fff" stroke="#fff" stroke-width="1.500">use these assets</text>
</g>
<g font-size="26" transform="translate(784 503) scale(1 1.130)">
<text x="0" y="0" textLength="117" lengthAdjust="spacingAndGlyphs" fill="#1f72dd" stroke="#1f72dd" stroke-width="6" filter="url(#gl)">group by</text>
<text x="0" y="0" textLength="117" lengthAdjust="spacingAndGlyphs" fill="#fff" stroke="#fff" stroke-width="1.500">group by</text>
</g>
<g font-size="34" transform="translate(473.200 563.600) scale(1 1.150)">
<text x="0" y="0" textLength="270.500" lengthAdjust="spacingAndGlyphs" fill="#1f72dd" stroke="#1f72dd" stroke-width="8">Selected prefab</text>
<text x="0" y="0" textLength="270.500" lengthAdjust="spacingAndGlyphs" fill="#fff" stroke="#fff" stroke-width="2">Selected prefab</text>
</g>
</g>
</svg>

</body></html>
